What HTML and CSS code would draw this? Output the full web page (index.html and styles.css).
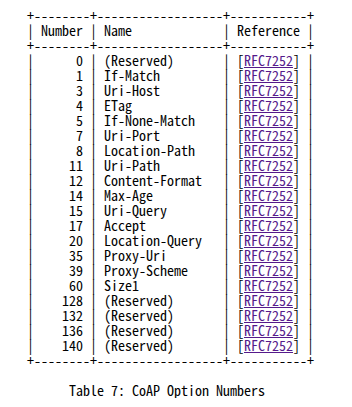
FILE: index.html
```html
<!DOCTYPE html>
<html>
<head>
<meta charset="utf-8">
<link rel="stylesheet" href="styles.css">
</head>
<body>
<pre class="table">   +--------+------------------+-----------+
   | Number | Name             | Reference |
   +--------+------------------+-----------+
   |      0 | (Reserved)       | [<a href="#r">RFC7252</a>] |
   |      1 | If-Match         | [<a href="#r">RFC7252</a>] |
   |      3 | Uri-Host         | [<a href="#r">RFC7252</a>] |
   |      4 | ETag             | [<a href="#r">RFC7252</a>] |
   |      5 | If-None-Match    | [<a href="#r">RFC7252</a>] |
   |      7 | Uri-Port         | [<a href="#r">RFC7252</a>] |
   |      8 | Location-Path    | [<a href="#r">RFC7252</a>] |
   |     11 | Uri-Path         | [<a href="#r">RFC7252</a>] |
   |     12 | Content-Format   | [<a href="#r">RFC7252</a>] |
   |     14 | Max-Age          | [<a href="#r">RFC7252</a>] |
   |     15 | Uri-Query        | [<a href="#r">RFC7252</a>] |
   |     17 | Accept           | [<a href="#r">RFC7252</a>] |
   |     20 | Location-Query   | [<a href="#r">RFC7252</a>] |
   |     35 | Proxy-Uri        | [<a href="#r">RFC7252</a>] |
   |     39 | Proxy-Scheme     | [<a href="#r">RFC7252</a>] |
   |     60 | Size1            | [<a href="#r">RFC7252</a>] |
   |    128 | (Reserved)       | [<a href="#r">RFC7252</a>] |
   |    132 | (Reserved)       | [<a href="#r">RFC7252</a>] |
   |    136 | (Reserved)       | [<a href="#r">RFC7252</a>] |
   |    140 | (Reserved)       | [<a href="#r">RFC7252</a>] |
   +--------+------------------+-----------+

         Table 7: CoAP Option Numbers</pre>
</body>
</html>
```
FILE: styles.css
```css
html, body {
  background: #ffffff;
}
body {
  margin: 8px 8px 8px 6px;
}
.table {
  margin: 0;
  font-family: "Noto Sans Mono CJK SC", "Liberation Mono", monospace;
  font-size: 14px;
  line-height: 15px;
  color: #000000;
}
.table a {
  color: #551a8b;
  text-decoration: underline;
}
```
